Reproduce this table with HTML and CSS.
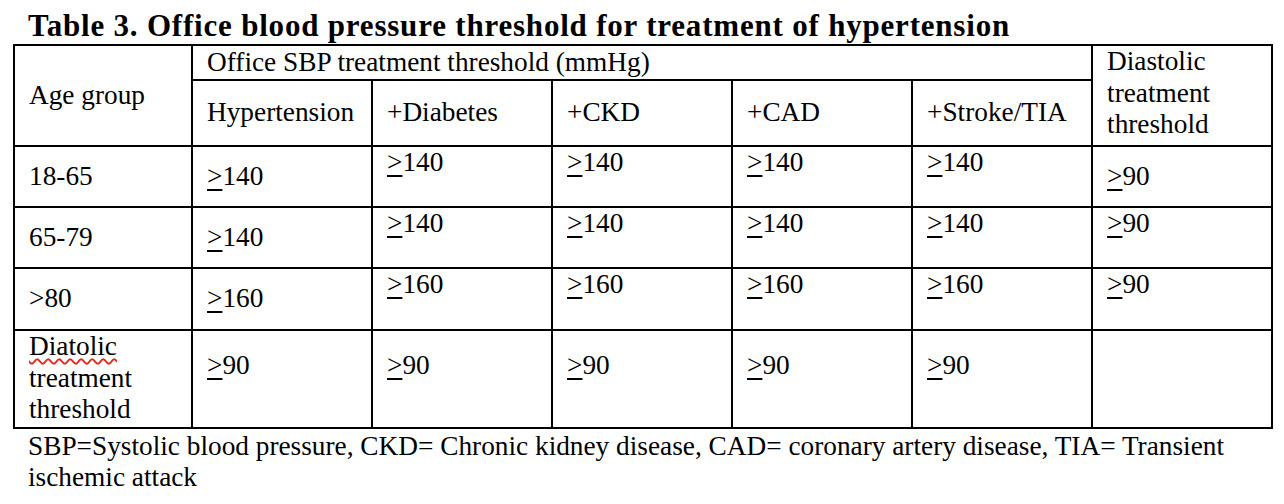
FILE: index.html
```html
<!DOCTYPE html>
<html lang="en">
<head>
<meta charset="utf-8">
<title>Table 3. Office blood pressure threshold</title>
<link rel="stylesheet" href="styles.css">
</head>
<body>
<div class="page">
  <h1 class="title">Table 3. Office blood pressure threshold for treatment of hypertension</h1>
  <table class="bp">
    <colgroup>
      <col class="c-age">
      <col class="c-val"><col class="c-val"><col class="c-val"><col class="c-val"><col class="c-val"><col class="c-val">
    </colgroup>
    <thead>
      <tr class="h1">
        <th rowspan="2" class="mid">Age group</th>
        <th colspan="5" class="sbp">Office SBP treatment threshold (mmHg)</th>
        <th rowspan="2" class="top">Diastolic treatment threshold</th>
      </tr>
      <tr class="h2">
        <th class="mid">Hypertension</th>
        <th class="mid">+Diabetes</th>
        <th class="mid">+CKD</th>
        <th class="mid">+CAD</th>
        <th class="mid">+Stroke/TIA</th>
      </tr>
    </thead>
    <tbody>
      <tr class="r">
        <td class="mid">18-65</td>
        <td class="mid"><span class="ge">&gt;</span>140</td>
        <td class="top"><span class="ge">&gt;</span>140</td>
        <td class="top"><span class="ge">&gt;</span>140</td>
        <td class="top"><span class="ge">&gt;</span>140</td>
        <td class="top"><span class="ge">&gt;</span>140</td>
        <td class="mid"><span class="ge">&gt;</span>90</td>
      </tr>
      <tr class="r">
        <td class="mid">65-79</td>
        <td class="mid"><span class="ge">&gt;</span>140</td>
        <td class="top"><span class="ge">&gt;</span>140</td>
        <td class="top"><span class="ge">&gt;</span>140</td>
        <td class="top"><span class="ge">&gt;</span>140</td>
        <td class="top"><span class="ge">&gt;</span>140</td>
        <td class="top"><span class="ge">&gt;</span>90</td>
      </tr>
      <tr class="r r3">
        <td class="mid">&gt;80</td>
        <td class="mid"><span class="ge">&gt;</span>160</td>
        <td class="top"><span class="ge">&gt;</span>160</td>
        <td class="top"><span class="ge">&gt;</span>160</td>
        <td class="top"><span class="ge">&gt;</span>160</td>
        <td class="top"><span class="ge">&gt;</span>160</td>
        <td class="top"><span class="ge">&gt;</span>90</td>
      </tr>
      <tr class="r last">
        <td class="top"><span class="typo">Diatolic</span> treatment threshold</td>
        <td class="pad"><span class="ge">&gt;</span>90</td>
        <td class="pad"><span class="ge">&gt;</span>90</td>
        <td class="pad"><span class="ge">&gt;</span>90</td>
        <td class="pad"><span class="ge">&gt;</span>90</td>
        <td class="pad"><span class="ge">&gt;</span>90</td>
        <td class="pad"></td>
      </tr>
    </tbody>
  </table>
  <p class="note">SBP=Systolic blood pressure, CKD= Chronic kidney disease, CAD= coronary artery disease, TIA= Transient ischemic attack</p>
</div>
</body>
</html>
```

FILE: styles.css
```css
html, body {
  margin: 0;
  padding: 0;
  background: #ffffff;
}

.page {
  padding: 8px 13px 0 13px;
  font-family: "Liberation Serif", "Times New Roman", serif;
  color: #000000;
}

.title {
  margin: 0;
  padding-left: 15px;
  font-size: 31px;
  line-height: 36px;
  font-weight: bold;
  letter-spacing: 0.8px;
  white-space: nowrap;
}

.bp {
  border-collapse: collapse;
  table-layout: fixed;
  width: 1259px;
  font-size: 27.3px;
  line-height: 31.5px;
}

.c-age { width: 178px; }
.c-val { width: 180px; }

.bp th,
.bp td {
  border: 2px solid #000;
  padding: 0 12px 0 14px;
  text-align: left;
  font-weight: normal;
}

.bp .mid { vertical-align: middle; }
.bp .top { vertical-align: top; }
.bp .pad { vertical-align: top; padding-top: 19px; }

.h1 { height: 35px; }
.h2 { height: 66px; }
.r { height: 61px; }
.r3 { height: 62px; }
.last { height: 98px; }

.ge {
  text-decoration: underline;
  text-decoration-thickness: 2px;
  text-underline-offset: 4px;
}

.typo {
  text-decoration: underline wavy #e0281e;
  text-decoration-thickness: 1.5px;
  text-underline-offset: 3px;
}

.note {
  margin: 2px 0 0 0;
  padding-left: 15px;
  width: 1230px;
  font-size: 27.3px;
  line-height: 31px;
}
```
